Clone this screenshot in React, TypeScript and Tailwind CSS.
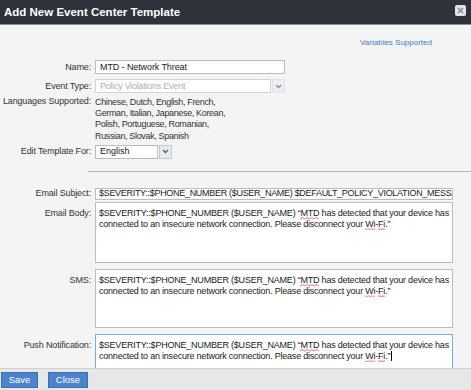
import React from "react";

function Chevron() {
  return (
    <svg width="7" height="5" viewBox="0 0 7 5">
      <path d="M1 1 L3.5 3.5 L6 1" fill="none" stroke="#3b68ad" strokeWidth="1.4" />
    </svg>
  );
}

function Label({ children, className = "" }: { children: React.ReactNode; className?: string }) {
  return (
    <div className={"w-[91px] shrink-0 text-right text-[#333] text-[9px] tracking-[-0.15px] whitespace-nowrap " + className}>
      {children}
    </div>
  );
}

function Spell({ children }: { children: React.ReactNode }) {
  return (
    <span className="relative inline-block">
      {children}
      <svg className="absolute left-0 bottom-[-1px] w-full h-[3px]" preserveAspectRatio="none" viewBox="0 0 20 3">
        <path d="M0 2 L2.5 0.5 L5 2 L7.5 0.5 L10 2 L12.5 0.5 L15 2 L17.5 0.5 L20 2" fill="none" stroke="#e04848" strokeWidth="0.8" />
      </svg>
    </span>
  );
}

function Message({ cursor = false }: { cursor?: boolean }) {
  return (
    <>
      <div className="whitespace-nowrap">
        $SEVERITY::$PHONE_NUMBER ($USER_NAME) “<Spell>MTD</Spell> has detected that your device has
      </div>
      <div className="whitespace-nowrap">
        connected to an insecure network connection. Please disconnect your <Spell>Wi</Spell>-<Spell>Fi</Spell>.”
        {cursor && <span className="inline-block w-px h-[10px] bg-black align-[-2px] ml-px" />}
      </div>
    </>
  );
}

export default function App() {
  return (
    <div className="w-[471px] h-[390px] overflow-hidden flex flex-col bg-[#f4f4f4] font-['Liberation_Sans',Arial,sans-serif] text-[9px] leading-[11px]">
      {/* title bar */}
      <div className="h-[25px] shrink-0 bg-[#2e323b] border-b border-[#8c9099] flex items-center justify-between pl-[4px] pr-[5px]">
        <span className="text-white font-bold text-[11.5px]">Add New Event Center Template</span>
        <div className="w-[11px] h-[11px] rounded-[2px] bg-[#e4e4e4] flex items-center justify-center mb-[3px]">
          <svg width="7" height="7" viewBox="0 0 7 7">
            <path d="M1 1 L6 6 M6 1 L1 6" stroke="#8a8a8a" strokeWidth="1.5" />
          </svg>
        </div>
      </div>

      {/* body */}
      <div className="h-[343px] shrink-0 overflow-hidden flex flex-col">
        <div className="shrink-0 mt-[13px] h-[10px] leading-[10px] text-right pr-[39px] text-[8px] text-[#3b7fc4]">
          Variables Supported
        </div>

        {/* Name */}
        <div className="shrink-0 mt-[12px] flex items-center gap-[4px]">
          <Label>Name:</Label>
          <div className="w-[190px] h-[14px] bg-white border border-[#b9bcc6] flex items-center pl-[4px] text-[9px] tracking-[-0.1px] text-[#222]">
            MTD - Network Threat
          </div>
        </div>

        {/* Event Type */}
        <div className="shrink-0 mt-[5px] flex items-center gap-[4px]">
          <Label>Event Type:</Label>
          <div className="flex h-[14px]">
            <div className="w-[176px] h-[14px] bg-white border border-[#d2d4da] flex items-center pl-[4px] text-[#b0b0b0] tracking-[-0.25px]">
              Policy Violations Event
            </div>
            <div className="w-[13px] h-[14px] ml-px bg-[#ececec] border border-[#d7d9de] flex items-center justify-center opacity-70">
              <Chevron />
            </div>
          </div>
        </div>

        {/* Languages */}
        <div className="shrink-0 mt-[3px] flex gap-[4px]">
          <Label>Languages Supported:</Label>
          <div className="text-[#333] leading-[11.2px] pt-px tracking-[-0.35px]">
            <div>Chinese, Dutch, English, French,</div>
            <div>German, Italian, Japanese, Korean,</div>
            <div>Polish, Portuguese, Romanian,</div>
            <div>Russian, Slovak, Spanish</div>
          </div>
        </div>

        {/* Edit template */}
        <div className="shrink-0 mt-[3px] flex items-center gap-[4px]">
          <Label>Edit Template For:</Label>
          <div className="flex h-[14px]">
            <div className="w-[63px] h-[14px] bg-white border border-[#b9bcc6] flex items-center pl-[4px] text-[9px] text-[#222]">
              English
            </div>
            <div className="w-[13px] h-[14px] ml-px bg-[#e8eaee] border border-[#c3c7cf] flex items-center justify-center">
              <Chevron />
            </div>
          </div>
        </div>

        {/* divider */}
        <hr className="shrink-0 mt-[12px] ml-[88px] border-0 border-t border-solid border-[#b4b8c0]" />

        {/* Email subject */}
        <div className="shrink-0 mt-[16px] flex items-center gap-[4px]">
          <Label>Email Subject:</Label>
          <div className="w-[358px] h-[12px] bg-white border border-[#b9bcc6] flex items-center pl-[3px] text-[9px] tracking-[-0.3px] text-[#222] overflow-hidden whitespace-nowrap">
            $SEVERITY::$PHONE_NUMBER ($USER_NAME) $DEFAULT_POLICY_VIOLATION_MESSAGE
          </div>
        </div>

        {/* Email body */}
        <div className="shrink-0 mt-[2px] flex gap-[4px]">
          <Label className="pt-[6px]">Email Body:</Label>
          <div className="w-[358px] h-[61px] bg-white border border-[#b9bcc6] pl-[3px] pt-[5px] text-[9px] tracking-[-0.22px] leading-[11px] text-[#222] overflow-hidden">
            <Message />
          </div>
        </div>

        {/* SMS */}
        <div className="shrink-0 mt-[6px] flex gap-[4px]">
          <Label className="pt-[6px]">SMS:</Label>
          <div className="w-[358px] h-[59px] bg-white border border-[#b9bcc6] pl-[3px] pt-[5px] text-[9px] tracking-[-0.22px] leading-[11px] text-[#222] overflow-hidden">
            <Message />
          </div>
        </div>

        {/* Push */}
        <div className="shrink-0 mt-[6px] flex gap-[4px]">
          <Label className="pt-[6px]">Push Notification:</Label>
          <div className="w-[358px] h-[60px] shrink-0 bg-white border border-[#7eacdc] pl-[3px] pt-[5px] text-[9px] tracking-[-0.22px] leading-[11px] text-[#222] overflow-hidden">
            <Message cursor />
          </div>
        </div>
      </div>

      {/* footer */}
      <div className="flex-1 bg-[#e7e7e7] border-t border-[#cfcfcf] flex items-start pt-[3px] pl-px gap-[10px]">
        <button className="w-[37px] h-[16px] bg-[#4d83ca] border border-[#3c6fb5] text-white text-[9.5px] leading-none">
          Save
        </button>
        <button className="w-[40px] h-[16px] bg-[#4d83ca] border border-[#3c6fb5] text-white text-[9.5px] leading-none">
          Close
        </button>
      </div>
    </div>
  );
}
